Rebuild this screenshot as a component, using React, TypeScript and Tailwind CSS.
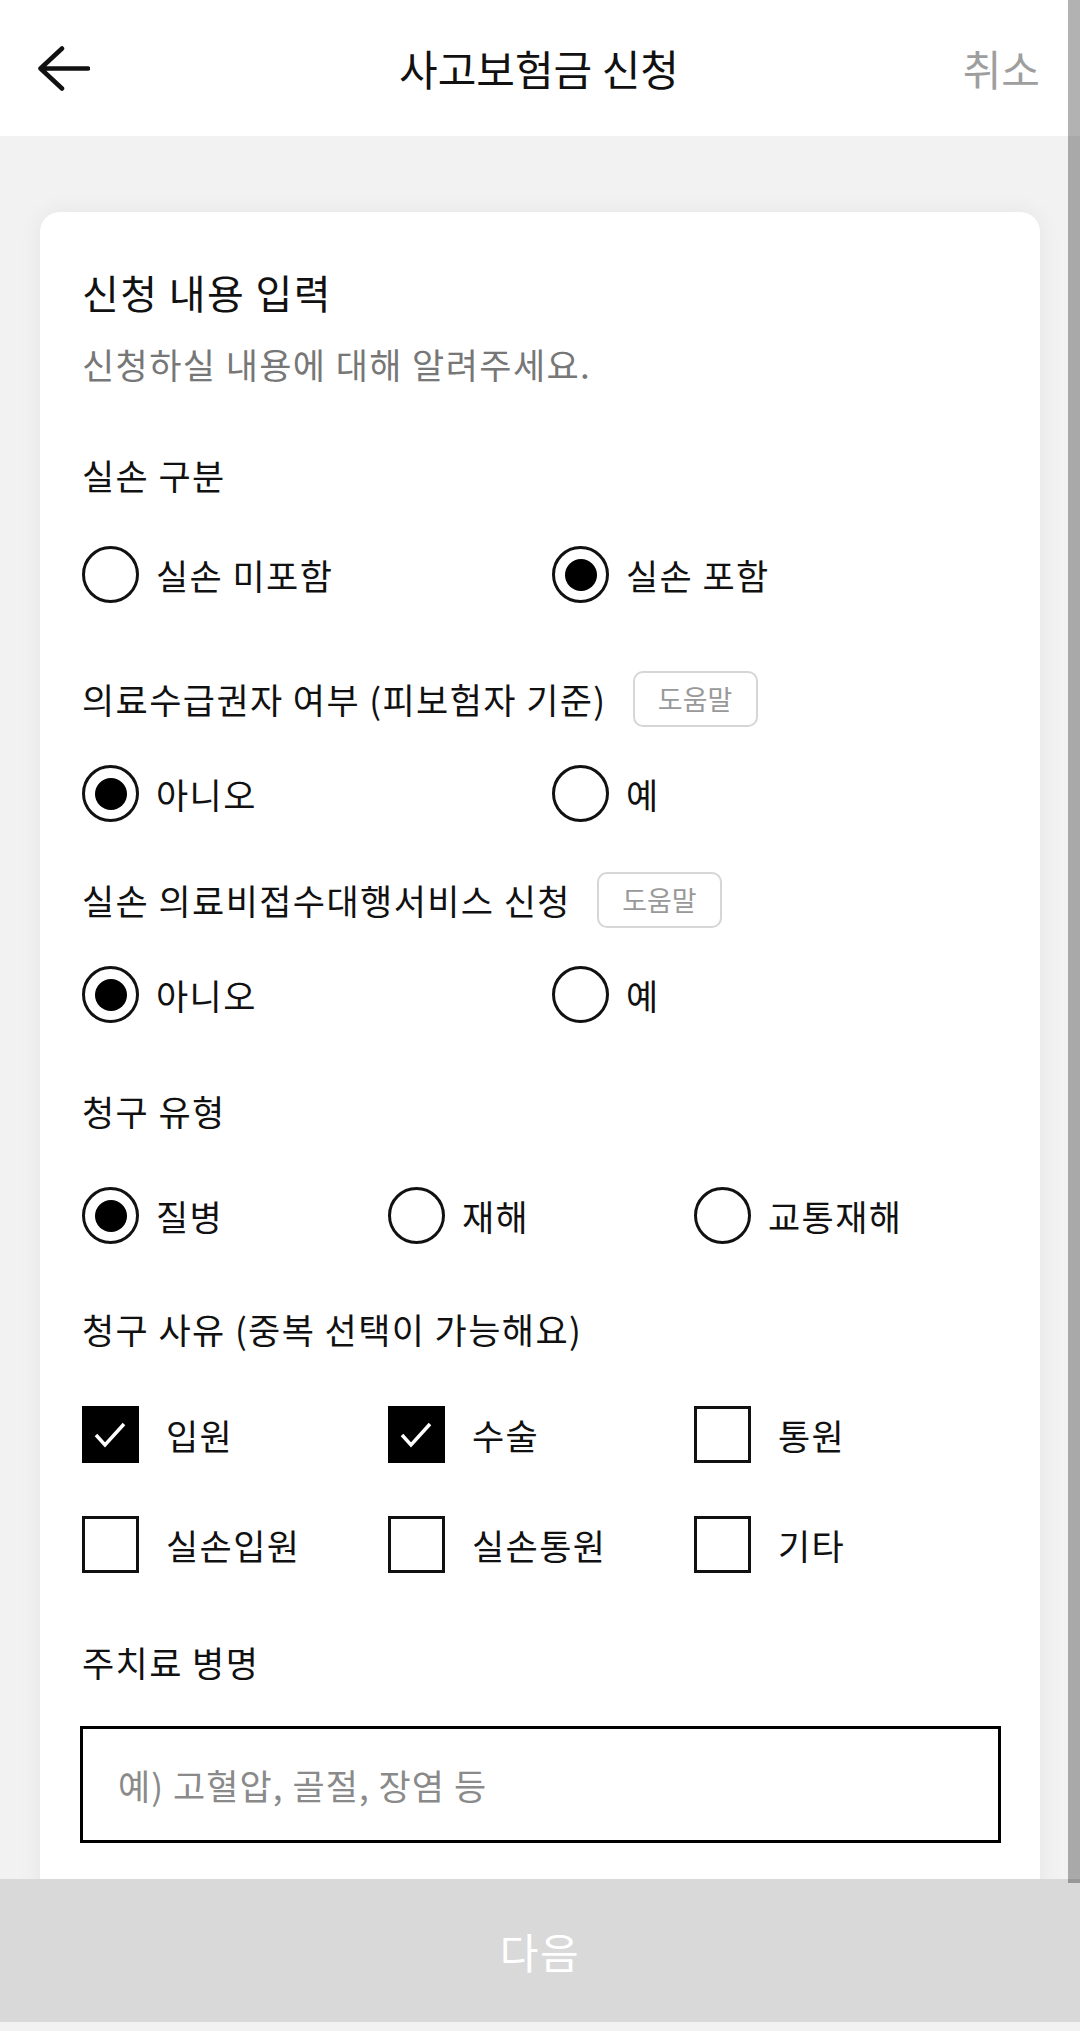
import { useState } from "react";

const font = "font-['Noto_Sans_CJK_KR','Noto_Sans',sans-serif]";

function Radio({ checked, label, onClick }: { checked: boolean; label: string; onClick: () => void }) {
    return (
        <button onClick={onClick} className="flex items-center gap-[17px] h-[57px] text-left">
            <span className="flex items-center justify-center w-[57px] h-[57px] rounded-full border-[3px] border-[#111] shrink-0">
                {checked && <span className="w-[32px] h-[32px] rounded-full bg-black" />}
            </span>
            <span className="text-[35px] leading-[44px] tracking-[0.04em] text-[#111]">{label}</span>
        </button>
    );
}

function Check({ checked, label, onClick }: { checked: boolean; label: string; onClick: () => void }) {
    return (
        <button onClick={onClick} className="flex items-center gap-[27px] h-[57px] text-left">
            <span
                className={
                    checked
                        ? "flex w-[57px] h-[57px] bg-black border-[3px] border-black shrink-0"
                        : "flex w-[57px] h-[57px] bg-white border-[3px] border-[#111] shrink-0"
                }
            >
                {checked && (
                    <svg viewBox="0 0 51 51" className="w-full h-full">
                        <path d="M11 26 L20 36 L39 15" fill="none" stroke="#fff" strokeWidth="3.5" />
                    </svg>
                )}
            </span>
            <span className="text-[35px] leading-[44px] tracking-[0.04em] text-[#111]">{label}</span>
        </button>
    );
}

function HelpLabel({ text, className }: { text: string; className: string }) {
    return (
        <div className={`flex items-center gap-[26px] h-[56px] ${className}`}>
            <span className="text-[35px] leading-[44px] tracking-[0.04em] text-[#111]">{text}</span>
            <span className="flex items-center justify-center w-[125px] h-[56px] rounded-[10px] border-2 border-[#d6d6d6] text-[27px] text-[#999]">
                도움말
            </span>
        </div>
    );
}

export default function App() {
    const [silson, setSilson] = useState(1);
    const [medical, setMedical] = useState(0);
    const [agency, setAgency] = useState(0);
    const [type, setType] = useState(0);
    const [reasons, setReasons] = useState<string[]>(["입원", "수술"]);

    const toggle = (r: string) =>
        setReasons((prev) => (prev.includes(r) ? prev.filter((x) => x !== r) : [...prev, r]));

    return (
        <div className={`relative flex flex-col h-[2031px] w-[1080px] overflow-hidden bg-[#f2f2f2] ${font}`}>
            {/* 헤더 */}
            <header className="grid grid-cols-[1fr_auto_1fr] items-center h-[136px] shrink-0 bg-white pl-[38px] pr-[40px]">
                <button className="justify-self-start">
                    <svg viewBox="0 0 52 45" className="w-[52px] h-[45px]">
                        <path
                            d="M24 2.5 L2.5 22.5 L24 42.5 M2.5 22.5 H50"
                            fill="none"
                            stroke="#111"
                            strokeWidth="4.5"
                            strokeLinecap="round"
                            strokeLinejoin="round"
                        />
                    </svg>
                </button>
                <h1 className="text-[42px] leading-[56px] text-[#111]">사고보험금 신청</h1>
                <button className="justify-self-end text-[42px] leading-[50px] text-[#9e9e9e]">취소</button>
            </header>

            {/* 본문 */}
            <main className="flex-1 overflow-hidden px-[40px] pt-[76px]">
                <section className="rounded-[20px] bg-white px-[42px] pt-[56px] pb-[200px] shadow-[0_0_24px_rgba(0,0,0,0.06)]">
                    <h2 className="text-[40px] leading-[48px] tracking-[0.035em] text-[#111]">신청 내용 입력</h2>
                    <p className="mt-[26px] text-[35px] leading-[44px] tracking-[0.04em] text-[#777]">
                        신청하실 내용에 대해 알려주세요.
                    </p>

                    <div className="mt-[67px] text-[35px] leading-[44px] tracking-[0.04em] text-[#111]">실손 구분</div>
                    <div className="mt-[49px] grid grid-cols-[470px_1fr]">
                        <Radio checked={silson === 0} label="실손 미포함" onClick={() => setSilson(0)} />
                        <Radio checked={silson === 1} label="실손 포함" onClick={() => setSilson(1)} />
                    </div>

                    <HelpLabel text="의료수급권자 여부 (피보험자 기준)" className="mt-[68px]" />
                    <div className="mt-[38px] grid grid-cols-[470px_1fr]">
                        <Radio checked={medical === 0} label="아니오" onClick={() => setMedical(0)} />
                        <Radio checked={medical === 1} label="예" onClick={() => setMedical(1)} />
                    </div>

                    <HelpLabel text="실손 의료비접수대행서비스 신청" className="mt-[50px]" />
                    <div className="mt-[38px] grid grid-cols-[470px_1fr]">
                        <Radio checked={agency === 0} label="아니오" onClick={() => setAgency(0)} />
                        <Radio checked={agency === 1} label="예" onClick={() => setAgency(1)} />
                    </div>

                    <div className="mt-[66px] text-[35px] leading-[44px] tracking-[0.04em] text-[#111]">청구 유형</div>
                    <div className="mt-[54px] grid grid-cols-[306px_306px_1fr]">
                        {["질병", "재해", "교통재해"].map((t, i) => (
                            <Radio key={t} checked={type === i} label={t} onClick={() => setType(i)} />
                        ))}
                    </div>

                    <div className="mt-[63px] text-[35px] leading-[44px] tracking-[0.04em] text-[#111]">
                        청구 사유 (중복 선택이 가능해요)
                    </div>
                    <div className="mt-[55px] grid grid-cols-[306px_306px_1fr] gap-y-[53px]">
                        {["입원", "수술", "통원", "실손입원", "실손통원", "기타"].map((r) => (
                            <Check key={r} checked={reasons.includes(r)} label={r} onClick={() => toggle(r)} />
                        ))}
                    </div>

                    <div className="mt-[67px] text-[35px] leading-[44px] tracking-[0.04em] text-[#111]">주치료 병명</div>
                    <input
                        placeholder="예) 고혈압, 골절, 장염 등"
                        className="mt-[42px] -mx-[2px] w-[921px] h-[117px] border-[3px] border-black px-[35px] text-[35px] tracking-[0.03em] text-[#111] outline-none placeholder:text-[#8a8a8a]"
                    />
                </section>
            </main>

            {/* 다음 버튼 */}
            <button className="h-[143px] shrink-0 bg-[#d9d9d9] text-[42px] tracking-[0.04em] text-white">다음</button>
            <div className="h-[9px] shrink-0 bg-[#f2f2f2]" />

            {/* 스크롤바 */}
            <div className="absolute right-0 top-0 w-[12px] h-[1883px] bg-black/30" />
        </div>
    );
}
